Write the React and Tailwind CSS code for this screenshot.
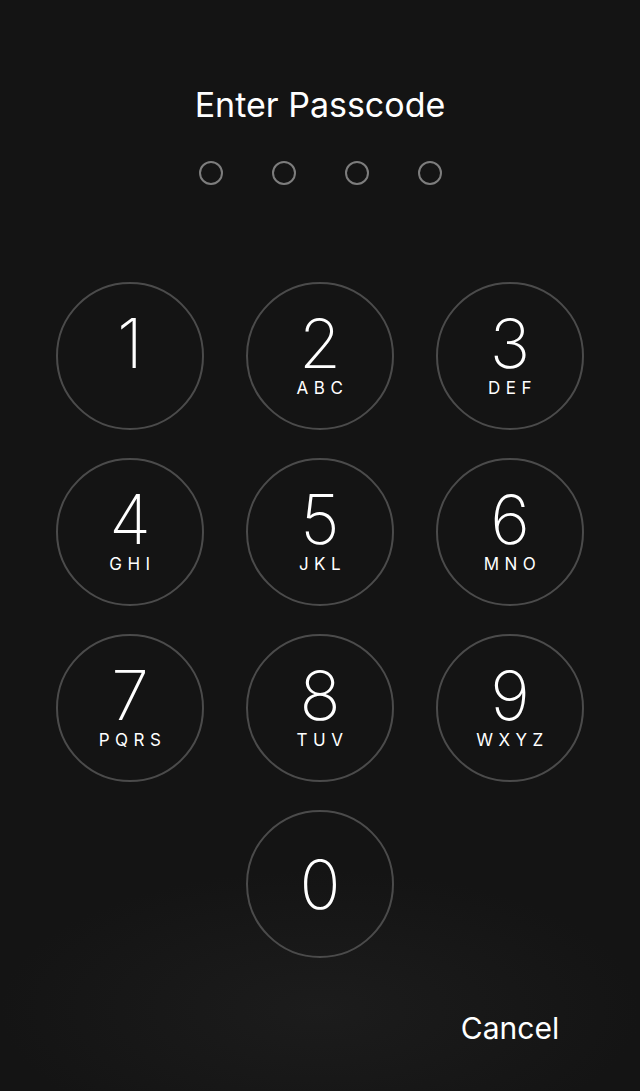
const keys = [
  { d: '1', l: '' },
  { d: '2', l: 'ABC' },
  { d: '3', l: 'DEF' },
  { d: '4', l: 'GHI' },
  { d: '5', l: 'JKL' },
  { d: '6', l: 'MNO' },
  { d: '7', l: 'PQRS' },
  { d: '8', l: 'TUV' },
  { d: '9', l: 'WXYZ' },
]

function Key({ d, l }) {
  return (
    <button className="flex h-[148px] w-[148px] flex-col items-center rounded-full border-2 border-[#4b4b4b] pt-[31px] text-white">
      <span className="text-[68px] font-extralight leading-[56px]">{d}</span>
      <span className="mt-[9px] h-4 pl-[5px] text-[17px] leading-4 tracking-[5.5px]">{l}</span>
    </button>
  )
}

export default function App() {
  return (
    <div
      className="flex h-[1091px] w-[640px] flex-col items-center bg-[#141414] text-white"
      style={{
        fontFamily: 'Inter, "Noto Sans", sans-serif',
        backgroundImage: 'radial-gradient(ellipse 320px 140px at 320px 1010px, #1c1c1c, #141414)',
      }}
    >
      <div className="mt-[85px] text-[34px] leading-10">Enter Passcode</div>

      <div className="mt-[36px] flex gap-[49px]">
        {[0, 1, 2, 3].map((i) => (
          <div key={i} className="h-6 w-6 rounded-full border-2 border-[#7d7d7d]" />
        ))}
      </div>

      <div className="mt-[97px] grid grid-cols-[148px_148px_148px] gap-x-[42px] gap-y-[28px]">
        {keys.map((k) => (
          <Key key={k.d} d={k.d} l={k.l} />
        ))}
        <div />
        <button className="flex h-[148px] w-[148px] items-center justify-center rounded-full border-2 border-[#4b4b4b] text-white">
          <span className="text-[68px] font-extralight leading-none">0</span>
        </button>
        <div />
      </div>

      <div className="mt-[52px] grid w-[528px] grid-cols-[148px_148px_148px] gap-x-[42px]">
        <div />
        <div />
        <button className="text-center text-[30px] leading-9 text-white">Cancel</button>
      </div>
    </div>
  )
}
